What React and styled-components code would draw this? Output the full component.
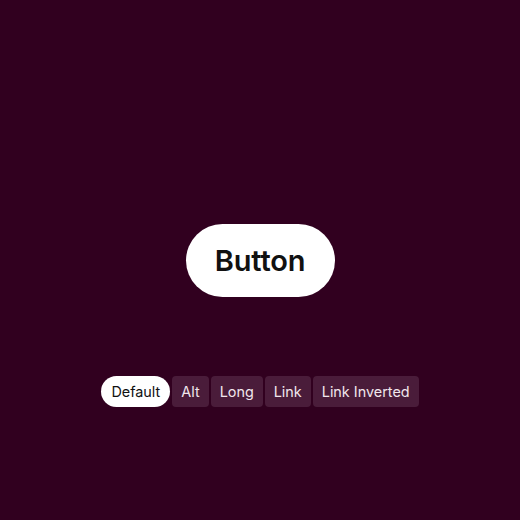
import React, { useState } from 'react'
import styled, { createGlobalStyle } from 'styled-components'

const Global = createGlobalStyle`
  html, body {
    margin: 0;
    padding: 0;
    background: #31001f;
  }
  body {
    font-family: Inter, "Noto Sans", sans-serif;
  }
`

const Page = styled.div`
  width: 520px;
  height: 520px;
  display: flex;
  flex-direction: column;
  align-items: center;
  padding-top: 224px;
  box-sizing: border-box;
`

const MainButton = styled.button`
  height: 73px;
  width: 149px;
  border: none;
  border-radius: 999px;
  background: #ffffff;
  color: #111;
  font-family: Inter, sans-serif;
  font-weight: 600;
  font-size: 29px;
  letter-spacing: -0.2px;
  cursor: pointer;
`

const Tabs = styled.div`
  display: flex;
  gap: 2px;
  margin-top: 79px;
`

const Tab = styled.button`
  height: 31px;
  padding: 0 ${p => (p.$active ? 10 : 9)}px;
  border: none;
  border-radius: ${p => (p.$active ? '999px' : '4px')};
  background: ${p => (p.$active ? '#ffffff' : '#4a1c3a')};
  color: ${p => (p.$active ? '#111' : '#f1e6ec')};
  font-family: Inter, sans-serif;
  font-size: 14.4px;
  cursor: pointer;
`

const variants = ['Default', 'Alt', 'Long', 'Link', 'Link Inverted']

export default function App() {
  const [active, setActive] = useState('Default')
  return (
    <>
      <Global />
      <Page>
        <MainButton>Button</MainButton>
        <Tabs>
          {variants.map(v => (
            <Tab key={v} $active={v === active} onClick={() => setActive(v)}>
              {v}
            </Tab>
          ))}
        </Tabs>
      </Page>
    </>
  )
}
